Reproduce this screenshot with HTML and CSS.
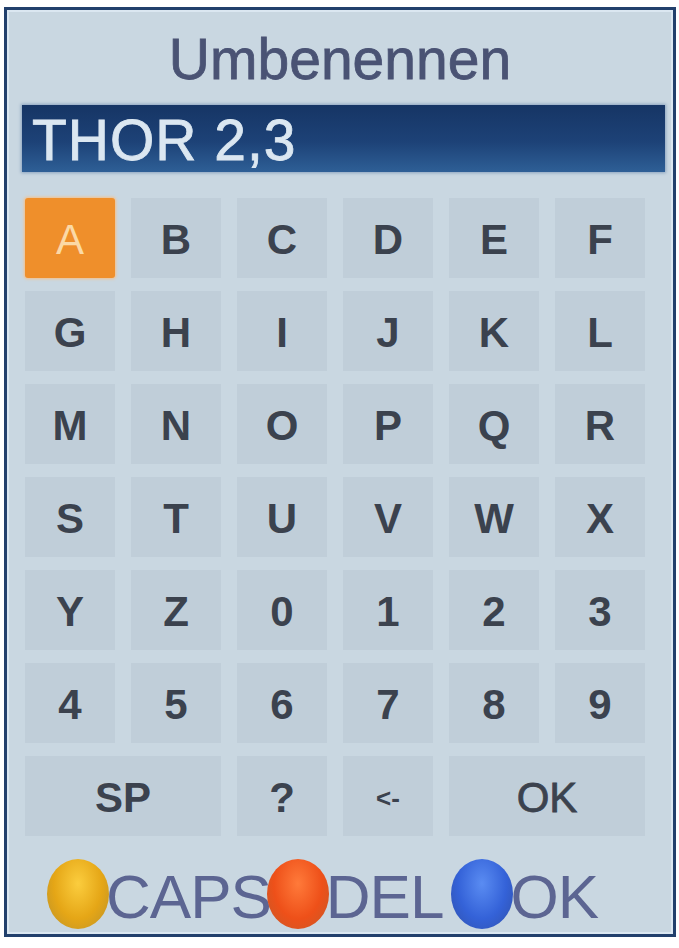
FILE: index.html
```html
<!DOCTYPE html>
<html lang="de">
<head>
<meta charset="utf-8">
<title>Umbenennen</title>
<link rel="stylesheet" href="styles.css">
</head>
<body>
<div class="panel">
  <div class="title">Umbenennen</div>
  <div class="field"><span class="field-text">THOR 2,3</span></div>
  <div class="grid">
    <div class="key key-active">A</div>
    <div class="key">B</div>
    <div class="key">C</div>
    <div class="key">D</div>
    <div class="key">E</div>
    <div class="key">F</div>
    <div class="key">G</div>
    <div class="key">H</div>
    <div class="key">I</div>
    <div class="key">J</div>
    <div class="key">K</div>
    <div class="key">L</div>
    <div class="key">M</div>
    <div class="key">N</div>
    <div class="key">O</div>
    <div class="key">P</div>
    <div class="key">Q</div>
    <div class="key">R</div>
    <div class="key">S</div>
    <div class="key">T</div>
    <div class="key">U</div>
    <div class="key">V</div>
    <div class="key">W</div>
    <div class="key">X</div>
    <div class="key">Y</div>
    <div class="key">Z</div>
    <div class="key">0</div>
    <div class="key">1</div>
    <div class="key">2</div>
    <div class="key">3</div>
    <div class="key">4</div>
    <div class="key">5</div>
    <div class="key">6</div>
    <div class="key">7</div>
    <div class="key">8</div>
    <div class="key">9</div>
    <div class="key key-wide">SP</div>
    <div class="key">?</div>
    <div class="key key-small">&lt;-</div>
    <div class="key key-wide key-thin">OK</div>
  </div>
  <div class="legend">
    <span class="ball ball-yellow"></span><span class="legend-text">CAPS</span>
    <span class="ball ball-red"></span><span class="legend-text">DEL</span>
    <span class="ball ball-blue"></span><span class="legend-text">OK</span>
  </div>
</div>
</body>
</html>
```
FILE: styles.css
```css
html, body {
  margin: 0;
  padding: 0;
  background: #ffffff;
}

body {
  font-family: "Liberation Sans", Arial, sans-serif;
}

.panel {
  margin: 7px 0 0 4px;
  width: 672px;
  height: 930px;
  box-sizing: border-box;
  border: 3px solid #22406c;
  box-shadow: inset 0 0 0 2px #dbe7f1;
  background: #c9d7e1;
  display: flex;
  flex-direction: column;
}

.title {
  height: 93px;
  display: flex;
  align-items: center;
  justify-content: center;
  font-size: 57px;
  color: #4a5374;
  -webkit-text-stroke: 0.8px #4a5374;
  padding-top: 4px;
  box-sizing: border-box;
}

.field {
  margin: 2px 8px 0 15px;
  height: 67px;
  background: linear-gradient(to bottom, #163565 0%, #1d4277 55%, #2e5f96 100%);
  box-shadow: 0 0 3px 1px #8aa3bf;
  display: flex;
  align-items: center;
  padding-left: 10px;
}

.field-text {
  font-size: 57px;
  letter-spacing: 1px;
  color: #dbe7f1;
  -webkit-text-stroke: 0.8px #dbe7f1;
  line-height: 1;
  padding-top: 4px;
}

.grid {
  margin: 26px 0 0 18px;
  display: grid;
  grid-template-columns: repeat(6, 90px);
  grid-auto-rows: 80px;
  column-gap: 16px;
  row-gap: 13px;
}

.key {
  background: #c0ced9;
  display: flex;
  align-items: center;
  justify-content: center;
  font-size: 42px;
  font-weight: bold;
  color: #3b424e;
  padding-top: 4px;
  box-sizing: border-box;
}

.key-active {
  background: #ef8f2b;
  color: #fbd9a6;
  font-weight: normal;
  border-radius: 3px;
  box-shadow: 0 0 3px 1px #f6c089;
}

.key-wide {
  grid-column: span 2;
}

.key-thin {
  font-weight: normal;
  -webkit-text-stroke: 0.8px #3b424e;
}

.key-small {
  font-size: 26px;
}

.legend {
  margin-top: 18px;
  padding-left: 40px;
  height: 80px;
  display: flex;
  align-items: center;
}

.ball {
  width: 62px;
  height: 70px;
  border-radius: 50%;
  flex: none;
}

.ball-yellow {
  background: radial-gradient(ellipse at 50% 35%, #fbcd3e 0%, #e5a616 55%, #b8902c 100%);
}

.ball-red {
  background: radial-gradient(ellipse at 50% 35%, #ff7a3a 0%, #ee5019 55%, #c25a2a 100%);
  margin-left: -4px;
}

.ball-blue {
  background: radial-gradient(ellipse at 50% 35%, #5a8cf2 0%, #3462d8 55%, #3050a8 100%);
  margin-left: 8px;
}

.legend-text {
  font-size: 62px;
  letter-spacing: -1px;
  color: #5c6592;
  margin-left: -3px;
  line-height: 1;
  padding-top: 6px;
}
```
